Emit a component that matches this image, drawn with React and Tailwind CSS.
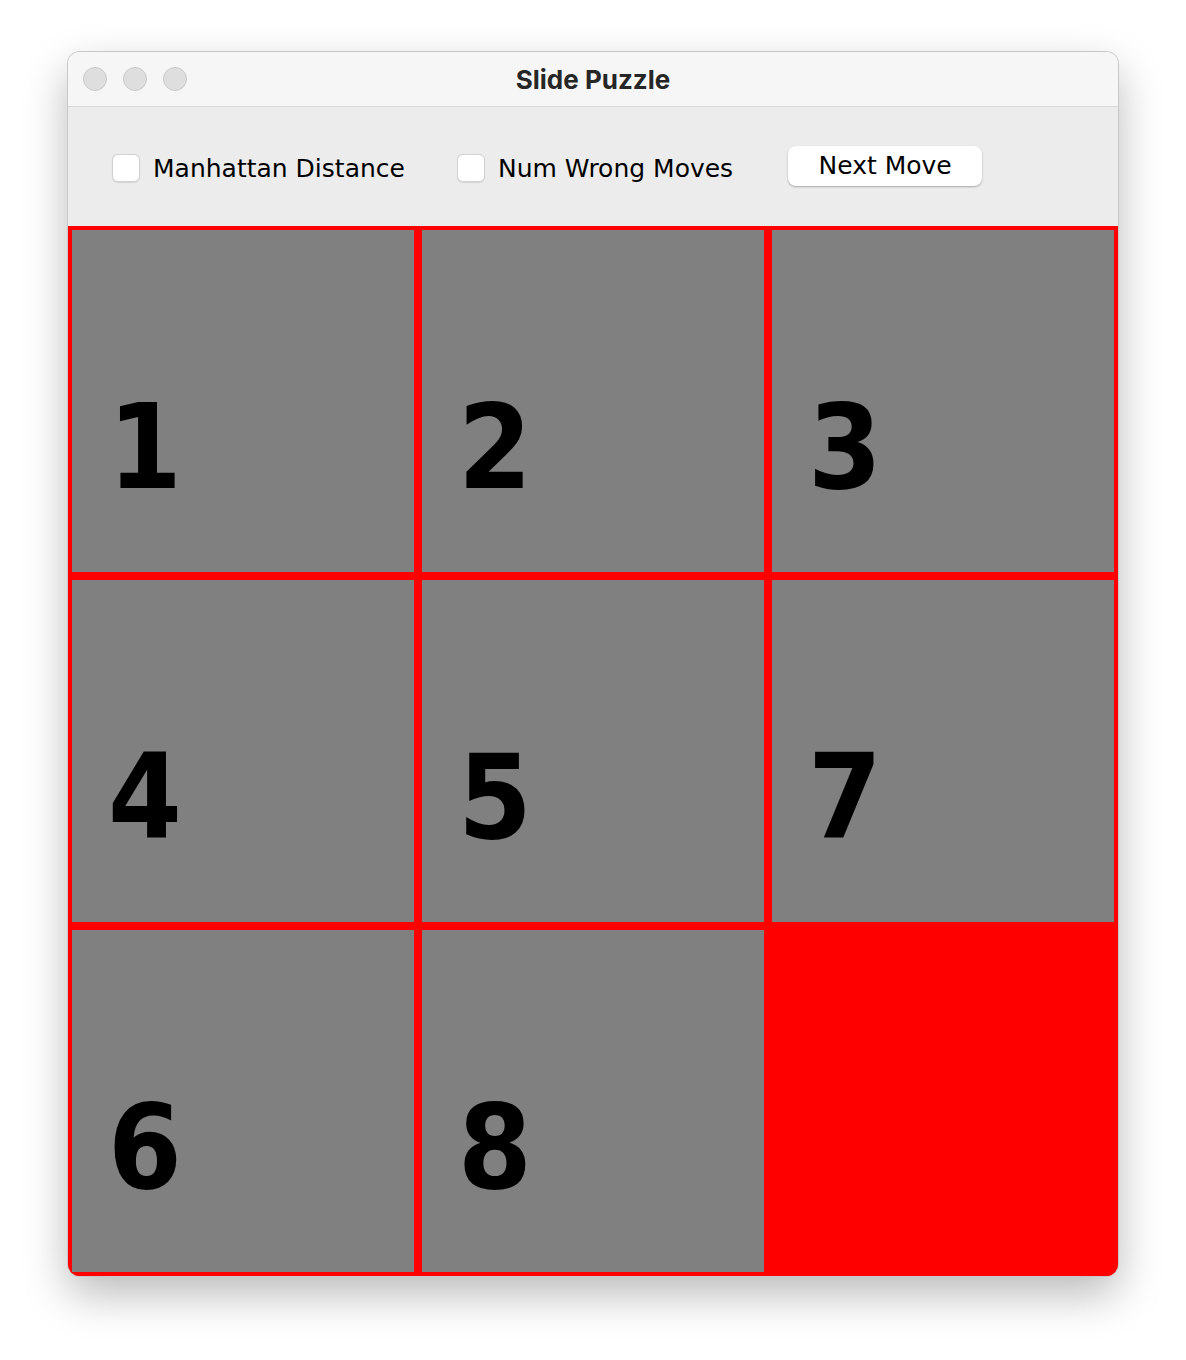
const tiles = [1, 2, 3, 4, 5, 7, 6, 8, null];

function TrafficLight() {
  return <span className="h-[24px] w-[24px] rounded-full border border-[#cacaca] bg-[#dedede]" />;
}

function Checkbox({ label }) {
  return (
    <label className="flex items-center gap-[13px]">
      <span className="h-[28px] w-[28px] rounded-[6px] border border-[#d2d2d2] bg-white shadow-[0_0.5px_1px_rgba(0,0,0,0.1)]" />
      <span className="text-[25px] leading-none text-black [font-family:'DejaVu_Sans',sans-serif]">{label}</span>
    </label>
  );
}

function Tile({ n }) {
  if (n === null) return <div className="h-[350px] w-[350px] bg-[#ff0000]" />;
  return (
    <div className="h-[350px] w-[350px] bg-[#ff0000] p-[4px]">
      <div className="h-full w-full bg-[#808080] pl-[36px] pt-[158px]">
        <span className="text-[118px] font-bold leading-none text-black [font-family:'DejaVu_Sans_Condensed','DejaVu_Sans',sans-serif]">
          {n}
        </span>
      </div>
    </div>
  );
}

export default function App() {
  return (
    <div className="min-h-[1360px] bg-white pl-[68px] pt-[52px]">
      <div className="w-[1050px] overflow-hidden rounded-[12px] shadow-[0_0_0_1px_#c8c8c8,0_18px_45px_rgba(0,0,0,0.28)]">
        <div className="relative flex h-[55px] items-center border-b border-[#d8d8d8] bg-[#f6f6f6] pl-[15px]">
          <div className="flex gap-[16px]">
            <TrafficLight />
            <TrafficLight />
            <TrafficLight />
          </div>
          <div className="absolute inset-0 flex items-center justify-center text-[26px] font-bold text-[#262626] [font-family:Inter,sans-serif]">
            Slide Puzzle
          </div>
        </div>
        <div className="flex h-[119px] items-center bg-[#ececec] pl-[44px] pt-[3px]">
          <Checkbox label="Manhattan Distance" />
          <div className="w-[52px]" />
          <Checkbox label="Num Wrong Moves" />
          <div className="w-[55px]" />
          <button className="mb-[5px] h-[40px] w-[194px] rounded-[8px] bg-white text-[25px] leading-none text-black shadow-[0_1px_2px_rgba(0,0,0,0.3)] [font-family:'DejaVu_Sans',sans-serif]">
            Next Move
          </button>
        </div>
        <div className="grid grid-cols-3 bg-[#ff0000]">
          {tiles.map((n, i) => (
            <Tile key={i} n={n} />
          ))}
        </div>
      </div>
    </div>
  );
}
